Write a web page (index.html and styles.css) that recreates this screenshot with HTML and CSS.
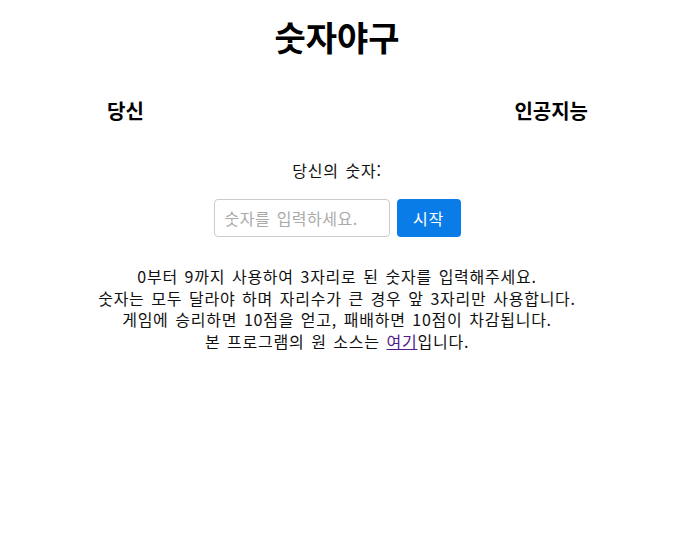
FILE: index.html
```html
<!DOCTYPE html>
<html lang="ko">
<head>
<meta charset="utf-8">
<title>숫자야구</title>
<link rel="stylesheet" href="styles.css">
</head>
<body>
<h1 class="title">숫자야구</h1>
<div class="players">
  <h3 class="player">당신</h3>
  <h3 class="player">인공지능</h3>
</div>
<div class="entry">
  <p class="label">당신의 숫자:</p>
  <div class="form">
    <input class="number-input" type="text" placeholder="숫자를 입력하세요.">
    <button class="start-btn">시작</button>
  </div>
</div>
<div class="rules">
  <p class="rule">0부터 9까지 사용하여 3자리로 된 숫자를 입력해주세요.</p>
  <p class="rule">숫자는 모두 달라야 하며 자리수가 큰 경우 앞 3자리만 사용합니다.</p>
  <p class="rule">게임에 승리하면 10점을 얻고, 패배하면 10점이 차감됩니다.</p>
  <p class="rule">본 프로그램의 원 소스는 <a class="link" href="#">여기</a>입니다.</p>
</div>
</body>
</html>
```
FILE: styles.css
```css
html, body {
  margin: 0;
  padding: 0;
  background: #fff;
}
body {
  font-family: "Noto Sans CJK KR", "Noto Sans", sans-serif;
  color: #111;
  text-align: center;
  word-spacing: 1.5px;
}
.title {
  margin: 0;
  padding-top: 13px;
  font-size: 34px;
  font-weight: 700;
  line-height: 48px;
  color: #000;
}
.players {
  display: flex;
  justify-content: space-between;
  padding: 0 86px 0 107px;
  margin-top: 36px;
}
.player {
  margin: 0;
  font-size: 20px;
  font-weight: 700;
  line-height: 28px;
  color: #000;
}
.entry {
  margin-top: 34px;
}
.label {
  margin: 0;
  font-size: 16px;
  line-height: 22px;
  letter-spacing: 0.75px;
}
.form {
  display: flex;
  justify-content: center;
  gap: 7px;
  margin-top: 18px;
}
.number-input {
  box-sizing: border-box;
  width: 176px;
  height: 38px;
  border: 1px solid #ccc;
  border-radius: 4px;
  padding: 0 10px;
  font-family: inherit;
  font-size: 16px;
  word-spacing: 1.5px;
  letter-spacing: 0.5px;
  color: #333;
}
.number-input::placeholder {
  color: #aaa;
}
.start-btn {
  box-sizing: border-box;
  width: 64px;
  height: 38px;
  border: none;
  border-radius: 4px;
  background: #0a7ce8;
  color: #fff;
  font-family: inherit;
  font-size: 16px;
  letter-spacing: 0.75px;
}
.rules {
  margin-top: 29px;
}
.rule {
  margin: 0;
  font-size: 16px;
  line-height: 21.5px;
  letter-spacing: 0.75px;
}
.link {
  color: #551a8b;
}
```
